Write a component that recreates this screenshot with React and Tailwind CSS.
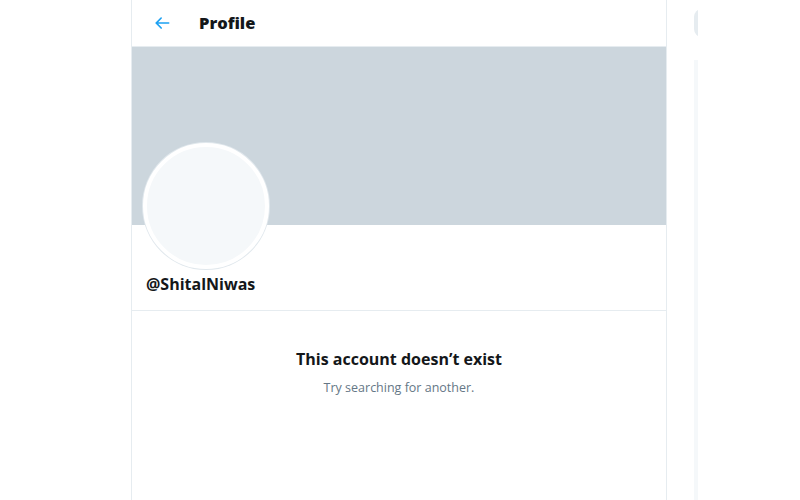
import React from 'react';

const font = { fontFamily: '"Open Sans", "Noto Sans", sans-serif' };

const BackArrow = () => (
  <svg viewBox="0 0 24 24" className="w-[20px] h-[20px] fill-[#1da1f2]">
    <path d="M20 11H7.414l4.293-4.293a1 1 0 0 0-1.414-1.414l-6 6a1 1 0 0 0 0 1.414l6 6a.996.996 0 0 0 1.414 0 1 1 0 0 0 0-1.414L7.414 13H20a1 1 0 1 0 0-2z" />
  </svg>
);

const App = () => {
  return (
    <div className="w-[800px] h-[500px] bg-white flex overflow-hidden" style={font}>
      <div className="w-[131px] shrink-0" />
      <main className="w-[536px] shrink-0 border-x border-[#e6ecf0] flex flex-col">
        <header className="h-[47px] border-b border-[#e6ecf0] flex items-center pl-[20px]">
          <BackArrow />
          <h1 className="ml-[27px] text-[16.5px] font-extrabold text-[#14171a] leading-none">Profile</h1>
        </header>
        <div className="h-[178px] bg-[#ccd6dd]" />
        <section className="border-b border-[#e6ecf0] px-[11px] h-[86px]">
          <div className="-mt-[82px] w-[126px] h-[126px] rounded-full border-[4px] border-white bg-[#f5f8fa] ring-1 ring-[#e1e8ed]" />
          <div className="mt-[5px] ml-[3px] text-[16px] font-bold text-[#14171a] leading-[20px]">@ShitalNiwas</div>
        </section>
        <div className="flex flex-col items-center pt-[37px]">
          <h2 className="text-[16px] font-bold text-[#14171a] leading-[22px]">This account doesn’t exist</h2>
          <p className="mt-[9px] text-[12.5px] text-[#657786] leading-[18px]">Try searching for another.</p>
        </div>
      </main>
      <aside className="ml-[27px] w-[4px] flex flex-col shrink-0 overflow-hidden">
        <div className="mt-[9px] h-[28px] w-[8px] rounded-l-full bg-[#e6ecf0]" />
        <div className="mt-[23px] flex-1 bg-[#f5f8fa]" />
      </aside>
    </div>
  );
};

export default App;
